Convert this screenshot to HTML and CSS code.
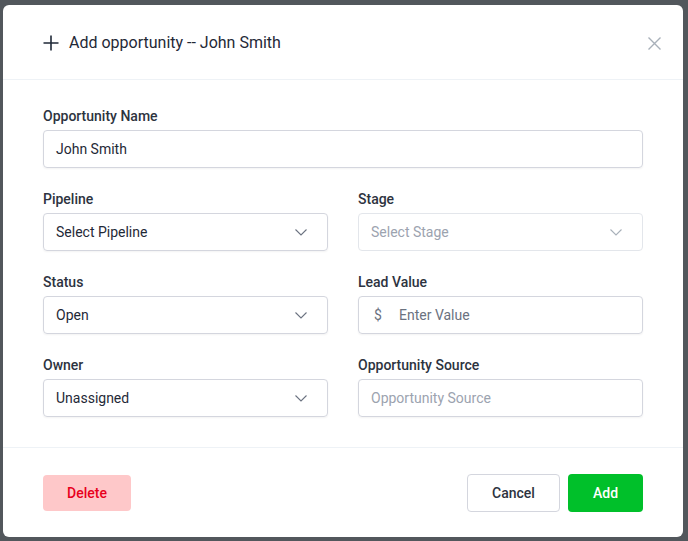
FILE: index.html
```html
<!DOCTYPE html>
<html>
<head>
<meta charset="utf-8">
<link rel="stylesheet" href="styles.css">
</head>
<body>
<div class="modal">
  <div class="modal-header">
    <div class="title">
      <svg class="plus" width="16" height="16" viewBox="0 0 16 16"><path d="M8 0.5V15.5M0.5 8H15.5" stroke="#1f2937" stroke-width="1.6" fill="none"/></svg>
      <span>Add opportunity -- John Smith</span>
    </div>
    <svg class="close" width="13" height="13" viewBox="0 0 13 13"><path d="M0.5 0.5L12.5 12.5M12.5 0.5L0.5 12.5" stroke="#a8b0b9" stroke-width="1.4" fill="none"/></svg>
  </div>
  <div class="modal-body">
    <div class="field full">
      <label>Opportunity Name</label>
      <div class="control"><span class="value">John Smith</span></div>
    </div>
    <div class="field">
      <label>Pipeline</label>
      <div class="control select"><span class="value">Select Pipeline</span><svg class="chev" width="12" height="7" viewBox="0 0 12 7"><path d="M0.5 0.5L6 6L11.5 0.5" stroke="#6b7280" stroke-width="1.1" fill="none"/></svg></div>
    </div>
    <div class="field">
      <label>Stage</label>
      <div class="control select disabled"><span class="value placeholder">Select Stage</span><svg class="chev" width="12" height="7" viewBox="0 0 12 7"><path d="M0.5 0.5L6 6L11.5 0.5" stroke="#a8b0b9" stroke-width="1.1" fill="none"/></svg></div>
    </div>
    <div class="field">
      <label>Status</label>
      <div class="control select"><span class="value">Open</span><svg class="chev" width="12" height="7" viewBox="0 0 12 7"><path d="M0.5 0.5L6 6L11.5 0.5" stroke="#6b7280" stroke-width="1.1" fill="none"/></svg></div>
    </div>
    <div class="field">
      <label>Lead Value</label>
      <div class="control money"><span class="dollar">$</span><span class="value placeholder dark">Enter Value</span></div>
    </div>
    <div class="field">
      <label>Owner</label>
      <div class="control select"><span class="value">Unassigned</span><svg class="chev" width="12" height="7" viewBox="0 0 12 7"><path d="M0.5 0.5L6 6L11.5 0.5" stroke="#6b7280" stroke-width="1.1" fill="none"/></svg></div>
    </div>
    <div class="field">
      <label>Opportunity Source</label>
      <div class="control"><span class="value placeholder">Opportunity Source</span></div>
    </div>
  </div>
  <div class="modal-footer">
    <button class="btn btn-delete">Delete</button>
    <div class="actions">
      <button class="btn btn-cancel">Cancel</button>
      <button class="btn btn-add">Add</button>
    </div>
  </div>
</div>
</body>
</html>
```
FILE: styles.css
```css
* { box-sizing: border-box; }
html, body { margin: 0; padding: 0; }
body {
  width: 688px;
  height: 541px;
  background: #52575c;
  font-family: Roboto, "Liberation Sans", sans-serif;
  overflow: hidden;
  padding: 5px 5px 0 3px;
}
.modal {
  width: 680px;
  height: 532px;
  background: #ffffff;
  border-radius: 6px;
  display: flex;
  flex-direction: column;
}
.modal-header {
  height: 75px;
  border-bottom: 1px solid #eef2f6;
  padding: 0 22px 0 40px;
  display: flex;
  align-items: center;
  justify-content: space-between;
}
.title {
  display: flex;
  align-items: center;
  gap: 10px;
  font-size: 16px;
  color: #1f2937;
  padding-top: 1px;
}
.plus { display: block; }
.close { display: block; margin-top: 2px; }
.modal-body {
  padding: 26px 40px 30px;
  display: grid;
  grid-template-columns: 285px 285px;
  column-gap: 30px;
  row-gap: 21px;
  border-bottom: 1px solid #eef2f6;
}
.field { display: flex; flex-direction: column; gap: 4px; }
.field.full { grid-column: 1 / 3; }
label {
  font-size: 14px;
  line-height: 20px;
  font-weight: 500;
  color: #2d3340;
}
.control {
  height: 38px;
  border: 1px solid #d4d6de;
  border-radius: 4px;
  box-shadow: 0 1px 2px rgba(0,0,0,0.05);
  display: flex;
  align-items: center;
  padding: 0 12px;
  font-size: 14px;
  color: #1f2937;
}
.control.select { justify-content: space-between; padding-right: 20px; }
.control.disabled { border-color: #e3e6eb; box-shadow: none; }
.placeholder { color: #9ca3af; }
.placeholder.dark { color: #6b7280; }
.dollar { color: #6b7280; width: 28px; padding-left: 3px; }
.chev { display: block; }
.modal-footer {
  flex: 1;
  padding: 0 40px;
  display: flex;
  align-items: center;
  justify-content: space-between;
}
.actions { display: flex; gap: 8px; }
.btn {
  font-family: Roboto, "Liberation Sans", sans-serif;
  font-size: 14px;
  font-weight: 500;
  border-radius: 4px;
  cursor: pointer;
}
.btn-delete {
  width: 88px;
  height: 36px;
  background: #fec8c9;
  border: none;
  color: #e8001c;
}
.btn-cancel {
  width: 93px;
  height: 38px;
  background: #fff;
  border: 1px solid #d4d6de;
  color: #2d3340;
}
.btn-add {
  width: 75px;
  height: 38px;
  background: #00c02a;
  border: none;
  color: #fff;
}
```
